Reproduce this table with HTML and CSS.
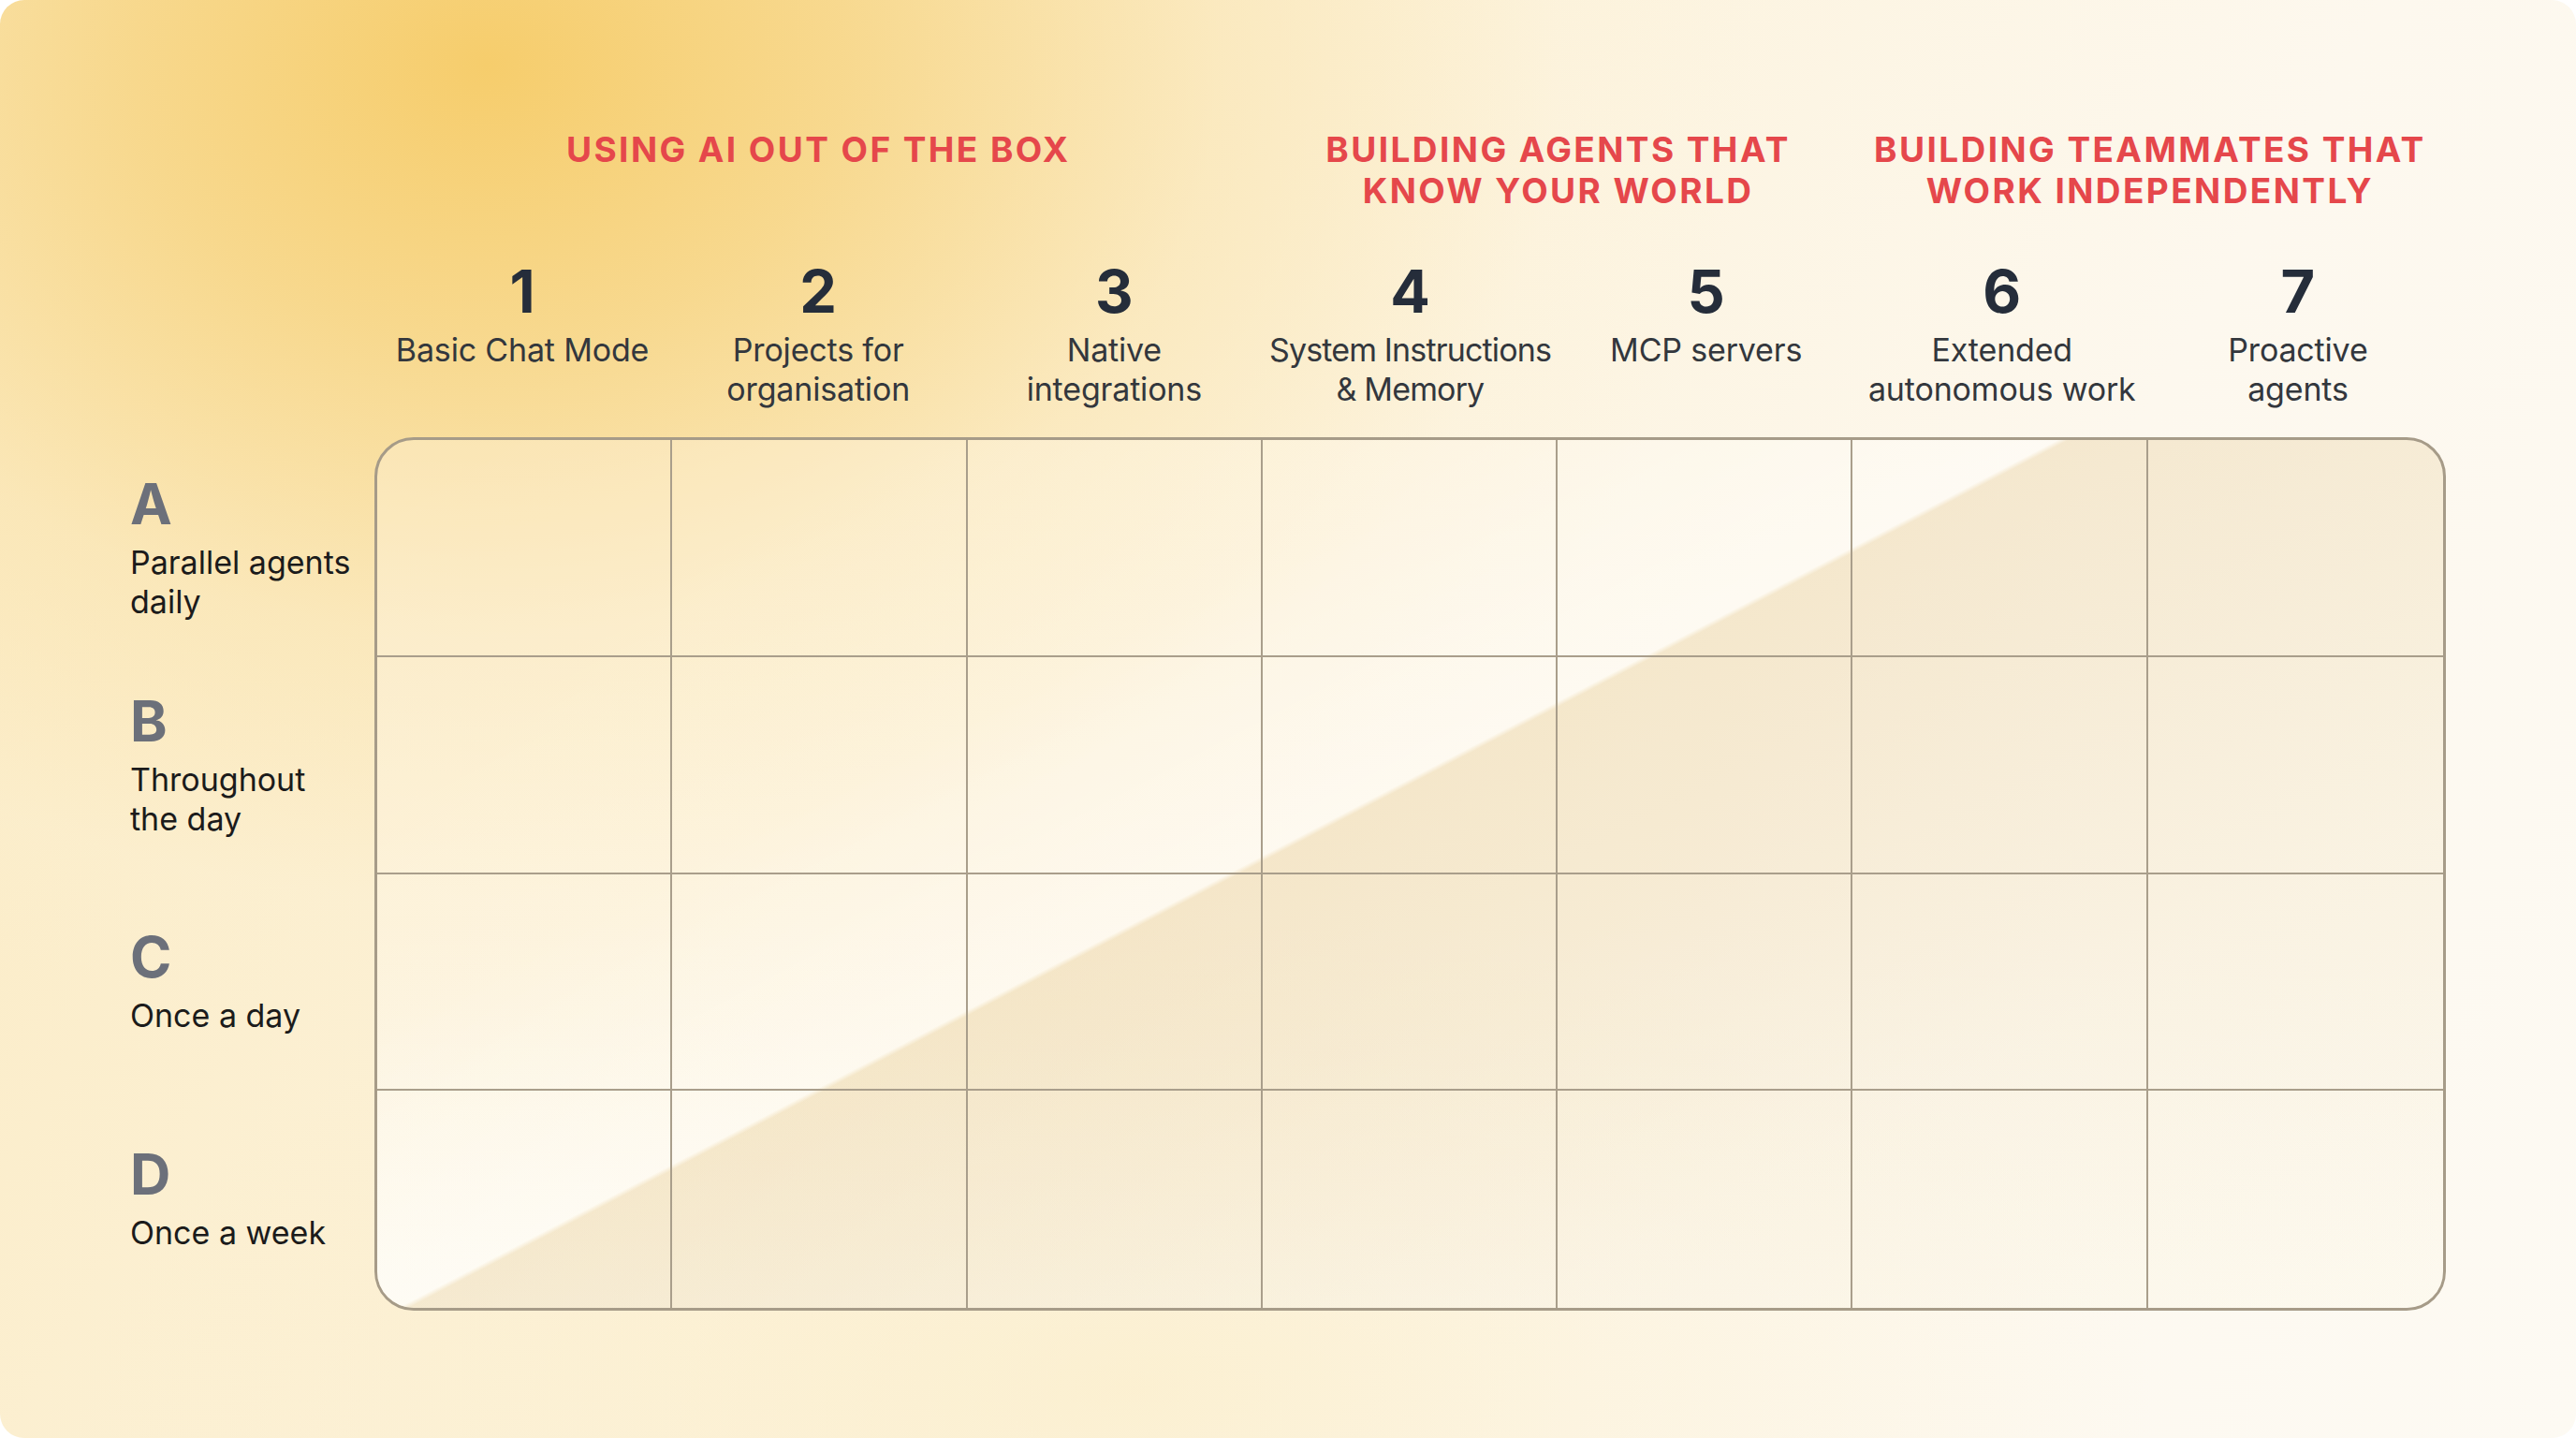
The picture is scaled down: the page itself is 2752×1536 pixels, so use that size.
FILE: index.html
```html
<!DOCTYPE html>
<html lang="en">
<head>
<meta charset="utf-8">
<title>AI maturity matrix</title>
<link rel="stylesheet" href="styles.css">
</head>
<body>
<main class="card">
  <div class="groups">
    <div class="group group-1">USING AI OUT OF THE BOX</div>
    <div class="group group-2">BUILDING AGENTS THAT<br>KNOW YOUR WORLD</div>
    <div class="group group-3">BUILDING TEAMMATES THAT<br>WORK INDEPENDENTLY</div>
  </div>

  <div class="heads">
    <div class="corner"></div>
    <div class="head"><div class="num">1</div><div class="lbl">Basic Chat Mode</div></div>
    <div class="head"><div class="num">2</div><div class="lbl">Projects for<br>organisation</div></div>
    <div class="head"><div class="num">3</div><div class="lbl">Native<br>integrations</div></div>
    <div class="head"><div class="num">4</div><div class="lbl lbl-tight">System Instructions<br>&amp; Memory</div></div>
    <div class="head"><div class="num">5</div><div class="lbl">MCP servers</div></div>
    <div class="head"><div class="num">6</div><div class="lbl">Extended<br>autonomous work</div></div>
    <div class="head"><div class="num">7</div><div class="lbl">Proactive<br>agents</div></div>
  </div>

  <div class="body">
    <div class="rows">
      <div class="rowlabel"><div class="letter">A</div><div class="rtext">Parallel agents<br>daily</div></div>
      <div class="rowlabel"><div class="letter">B</div><div class="rtext">Throughout<br>the day</div></div>
      <div class="rowlabel"><div class="letter">C</div><div class="rtext">Once a day</div></div>
      <div class="rowlabel"><div class="letter">D</div><div class="rtext">Once a week</div></div>
    </div>
    <div class="matrix">
      <div class="cell"></div><div class="cell"></div><div class="cell"></div><div class="cell"></div><div class="cell"></div><div class="cell"></div><div class="cell last-col"></div>
      <div class="cell"></div><div class="cell"></div><div class="cell"></div><div class="cell"></div><div class="cell"></div><div class="cell"></div><div class="cell last-col"></div>
      <div class="cell"></div><div class="cell"></div><div class="cell"></div><div class="cell"></div><div class="cell"></div><div class="cell"></div><div class="cell last-col"></div>
      <div class="cell last-row"></div><div class="cell last-row"></div><div class="cell last-row"></div><div class="cell last-row"></div><div class="cell last-row"></div><div class="cell last-row"></div><div class="cell last-row last-col"></div>
      <div class="gloss"></div>
    </div>
  </div>
</main>
</body>
</html>
```

FILE: styles.css
```css
* { box-sizing: border-box; }

html, body {
  margin: 0;
  padding: 0;
  background: #ffffff;
}

body {
  font-family: Inter, "Noto Sans", "Liberation Sans", sans-serif;
  width: 2752px;
  height: 1536px;
  overflow: hidden;
}

.card {
  width: 2752px;
  height: 1536px;
  border-radius: 26px;
  padding: 138px 139px 0 139px;
  background:
    radial-gradient(ellipse 1350px 1050px at 520px 70px,
      rgba(246, 205, 108, 1) 0%,
      rgba(247, 214, 135, 0.9) 28%,
      rgba(250, 228, 175, 0.6) 58%,
      rgba(252, 240, 210, 0.2) 85%,
      rgba(253, 246, 230, 0) 100%),
    radial-gradient(ellipse 1100px 500px at 1200px 1480px,
      rgba(251, 236, 196, 0.6) 0%,
      rgba(251, 236, 196, 0) 100%),
    linear-gradient(120deg, #fbeac0 0%, #fcf2da 40%, #fdf8ee 70%, #fdfaf3 100%);
}

/* group titles */
.groups {
  display: grid;
  grid-template-columns: 261px repeat(7, 1fr);
}

.group {
  color: #e5474b;
  font-weight: 700;
  font-size: 37px;
  line-height: 44px;
  letter-spacing: 0.065em;
  text-align: center;
}

.group-1 { grid-column: 2 / 5; }
.group-2 { grid-column: 5 / 7; }
.group-3 { grid-column: 7 / 9; }

/* column heads */
.heads {
  display: grid;
  grid-template-columns: 261px repeat(7, 1fr);
  margin-top: 54px;
  align-items: start;
}

.head {
  text-align: center;
}

.num {
  font-size: 63px;
  line-height: 63px;
  font-weight: 700;
  color: #252d3a;
}

.lbl {
  margin-top: 10px;
  font-size: 34px;
  line-height: 42px;
  color: #33373d;
  letter-spacing: -0.005em;
}

.lbl-tight {
  letter-spacing: -0.025em;
}

/* body */
.body {
  display: grid;
  grid-template-columns: 261px 1fr;
  margin-top: 30px;
}

.rows {
  display: grid;
  grid-template-rows: repeat(4, 1fr);
  padding: 3px 0;
}

.rowlabel {
  display: flex;
  flex-direction: column;
  justify-content: center;
}

.letter {
  font-size: 60px;
  line-height: 60px;
  font-weight: 700;
  color: #6c707a;
}

.rtext {
  margin-top: 12px;
  font-size: 34px;
  line-height: 42px;
  color: #1b1b1b;
}

.matrix {
  position: relative;
  height: 933px;
  display: grid;
  grid-template-columns: repeat(7, 1fr);
  grid-template-rows: repeat(4, 1fr);
  border: 3px solid #a69b88;
  border-radius: 42px;
  overflow: hidden;
  background:
    linear-gradient(to bottom, rgba(255, 252, 244, 0) 55%, rgba(255, 252, 244, 0.55) 100%),
    rgba(255, 250, 236, 0.3);
}

.cell {
  border-right: 2px solid #a99e8b;
  border-bottom: 2px solid #a99e8b;
  position: relative;
  z-index: 2;
}

.cell.last-col { border-right: none; }
.cell.last-row { border-bottom: none; }

.gloss {
  position: absolute;
  inset: 0;
  z-index: 1;
  pointer-events: none;
  background:
    linear-gradient(152.4deg,
      rgba(255, 255, 255, 0) 0%,
      rgba(255, 255, 255, 0.05) 30%,
      rgba(255, 255, 255, 0.42) 45.1%,
      rgba(222, 190, 128, 0.27) 45.4%,
      rgba(222, 190, 128, 0.21) 57%,
      rgba(222, 190, 128, 0.11) 75%,
      rgba(222, 190, 128, 0.04) 100%),
    linear-gradient(to bottom, rgba(255, 255, 255, 0) 65%, rgba(255, 253, 246, 0.35) 100%);
}
```
